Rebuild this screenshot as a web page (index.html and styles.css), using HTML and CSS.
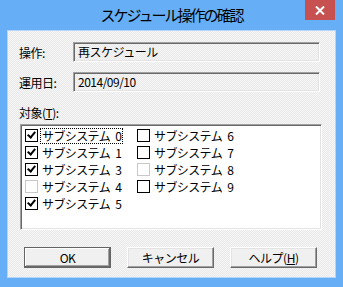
FILE: index.html
```html
<!DOCTYPE html>
<html lang="ja">
<head>
    <meta charset="UTF-8">
    <title>スケジュール操作の確認</title>
    <link rel="stylesheet" href="styles.css">
</head>
<body>
    <div class="ventana">
        <div class="titulo">
            <span class="titulo-texto">スケジュール操作の確認</span>
            <span class="cerrar">
                <svg width="10" height="9" viewBox="0 0 10 9"><path d="M1 0.5 L9 8.5 M9 0.5 L1 8.5" stroke="#fff" stroke-width="2"/></svg>
            </span>
        </div>
        <div class="cliente">
            <div class="fila">
                <span class="etiqueta">操作:</span>
                <div class="campo">再スケジュール</div>
            </div>
            <div class="fila">
                <span class="etiqueta">運用日:</span>
                <div class="campo">2014/09/10</div>
            </div>
            <div class="objeto-label">対象(<u>T</u>):</div>
            <div class="lista">
                <div class="columna">
                    <div class="item"><span class="caja marcada"></span><span class="nombre foco">サブシステム 0</span></div>
                    <div class="item"><span class="caja marcada"></span><span class="nombre">サブシステム 1</span></div>
                    <div class="item"><span class="caja marcada"></span><span class="nombre">サブシステム 3</span></div>
                    <div class="item"><span class="caja inactiva"></span><span class="nombre">サブシステム 4</span></div>
                    <div class="item"><span class="caja marcada"></span><span class="nombre">サブシステム 5</span></div>
                </div>
                <div class="columna">
                    <div class="item"><span class="caja"></span><span class="nombre">サブシステム 6</span></div>
                    <div class="item"><span class="caja"></span><span class="nombre">サブシステム 7</span></div>
                    <div class="item"><span class="caja inactiva"></span><span class="nombre">サブシステム 8</span></div>
                    <div class="item"><span class="caja"></span><span class="nombre">サブシステム 9</span></div>
                </div>
            </div>
            <div class="botones">
                <button class="boton defecto">OK</button>
                <button class="boton">キャンセル</button>
                <button class="boton">ヘルプ(<u>H</u>)</button>
            </div>
        </div>
    </div>
</body>
</html>
```

FILE: styles.css
```css
body {
    margin: 0;
    font-family: "Noto Sans CJK JP", "Liberation Sans", sans-serif;
    font-size: 12px;
    color: #000;
}
.ventana {
    width: 343px;
    height: 287px;
    box-sizing: border-box;
    background: #66aef5;
    padding: 0 7px 9px 7px;
    display: flex;
    flex-direction: column;
}
.titulo {
    height: 30px;
    position: relative;
    display: flex;
    justify-content: center;
    align-items: center;
}
.titulo-texto {
    font-size: 15px;
    letter-spacing: -2px;
    color: #000;
    margin-top: -1px;
}
.cerrar {
    position: absolute;
    top: 0;
    right: 1px;
    width: 30px;
    height: 20px;
    background: #c75050;
    display: flex;
    justify-content: center;
    align-items: center;
}
.cliente {
    flex: 1;
    border: 1px solid #b4d5f5;
    background: repeating-conic-gradient(#f6f6f6 0 25%, #e9e9e9 0 50%) 0 0 / 2px 2px;
    padding: 11px 15px 0 11px;
    display: flex;
    flex-direction: column;
}
.fila {
    display: flex;
    align-items: center;
    height: 20px;
    margin-bottom: 10px;
}
.etiqueta {
    width: 54px;
    letter-spacing: -0.5px;
}
.campo {
    flex: 1;
    height: 20px;
    box-sizing: border-box;
    border: 1px solid;
    border-color: #a0a0a0 #fff #fff #a0a0a0;
    box-shadow: inset 1px 1px #696969, inset -1px -1px #e3e3e3;
    padding: 0 4px;
    line-height: 18px;
    letter-spacing: -0.5px;
}
.objeto-label {
    margin-top: 1px;
    height: 20px;
    line-height: 20px;
    letter-spacing: -0.5px;
}
.objeto-label u, .boton u {
    text-decoration-thickness: 1px;
    text-underline-offset: 1px;
}
.lista {
    margin: 1px 0 0 1px;
    width: 302px;
    height: 106px;
    box-sizing: border-box;
    border: 1px solid;
    border-color: #a0a0a0 #fff #fff #a0a0a0;
    box-shadow: inset 1px 1px #696969, inset -1px -1px #e3e3e3;
    background: #fff;
    padding: 2px 0 0 4px;
    display: flex;
}
.columna {
    width: 112px;
}
.item {
    height: 17px;
    display: flex;
    align-items: center;
}
.caja {
    width: 13px;
    height: 13px;
    box-sizing: border-box;
    border: 1px solid #000;
    background: #fff;
    margin-right: 2px;
    position: relative;
}
.caja.inactiva {
    border-color: #c8c8c8;
}
.caja.marcada::after {
    content: "";
    position: absolute;
    left: 3px;
    top: 0px;
    width: 3px;
    height: 6px;
    border: solid #000;
    border-width: 0 2px 2px 0;
    transform: rotate(40deg);
}
.nombre {
    letter-spacing: -0.6px;
    word-spacing: 3px;
    line-height: 14px;
    padding: 0 1px;
    border: 1px solid transparent;
}
.nombre.foco {
    border: 1px dotted #000;
}
.botones {
    margin-top: 17px;
    padding-left: 5px;
    display: flex;
    gap: 16px;
}
.boton {
    width: 87px;
    height: 21px;
    font-family: inherit;
    font-size: 12px;
    letter-spacing: -0.5px;
    color: #000;
    background: #f0f0f0;
    border: 1px solid;
    border-color: #fff #696969 #696969 #fff;
    box-shadow: inset -1px -1px #a0a0a0, inset 1px 1px #e3e3e3;
    padding: 0;
    line-height: 17px;
}
.boton.defecto {
    border: 1px solid #646464;
    box-shadow: inset -1px -1px #696969, inset 1px 1px #fff, inset -2px -2px #a0a0a0;
}
```
